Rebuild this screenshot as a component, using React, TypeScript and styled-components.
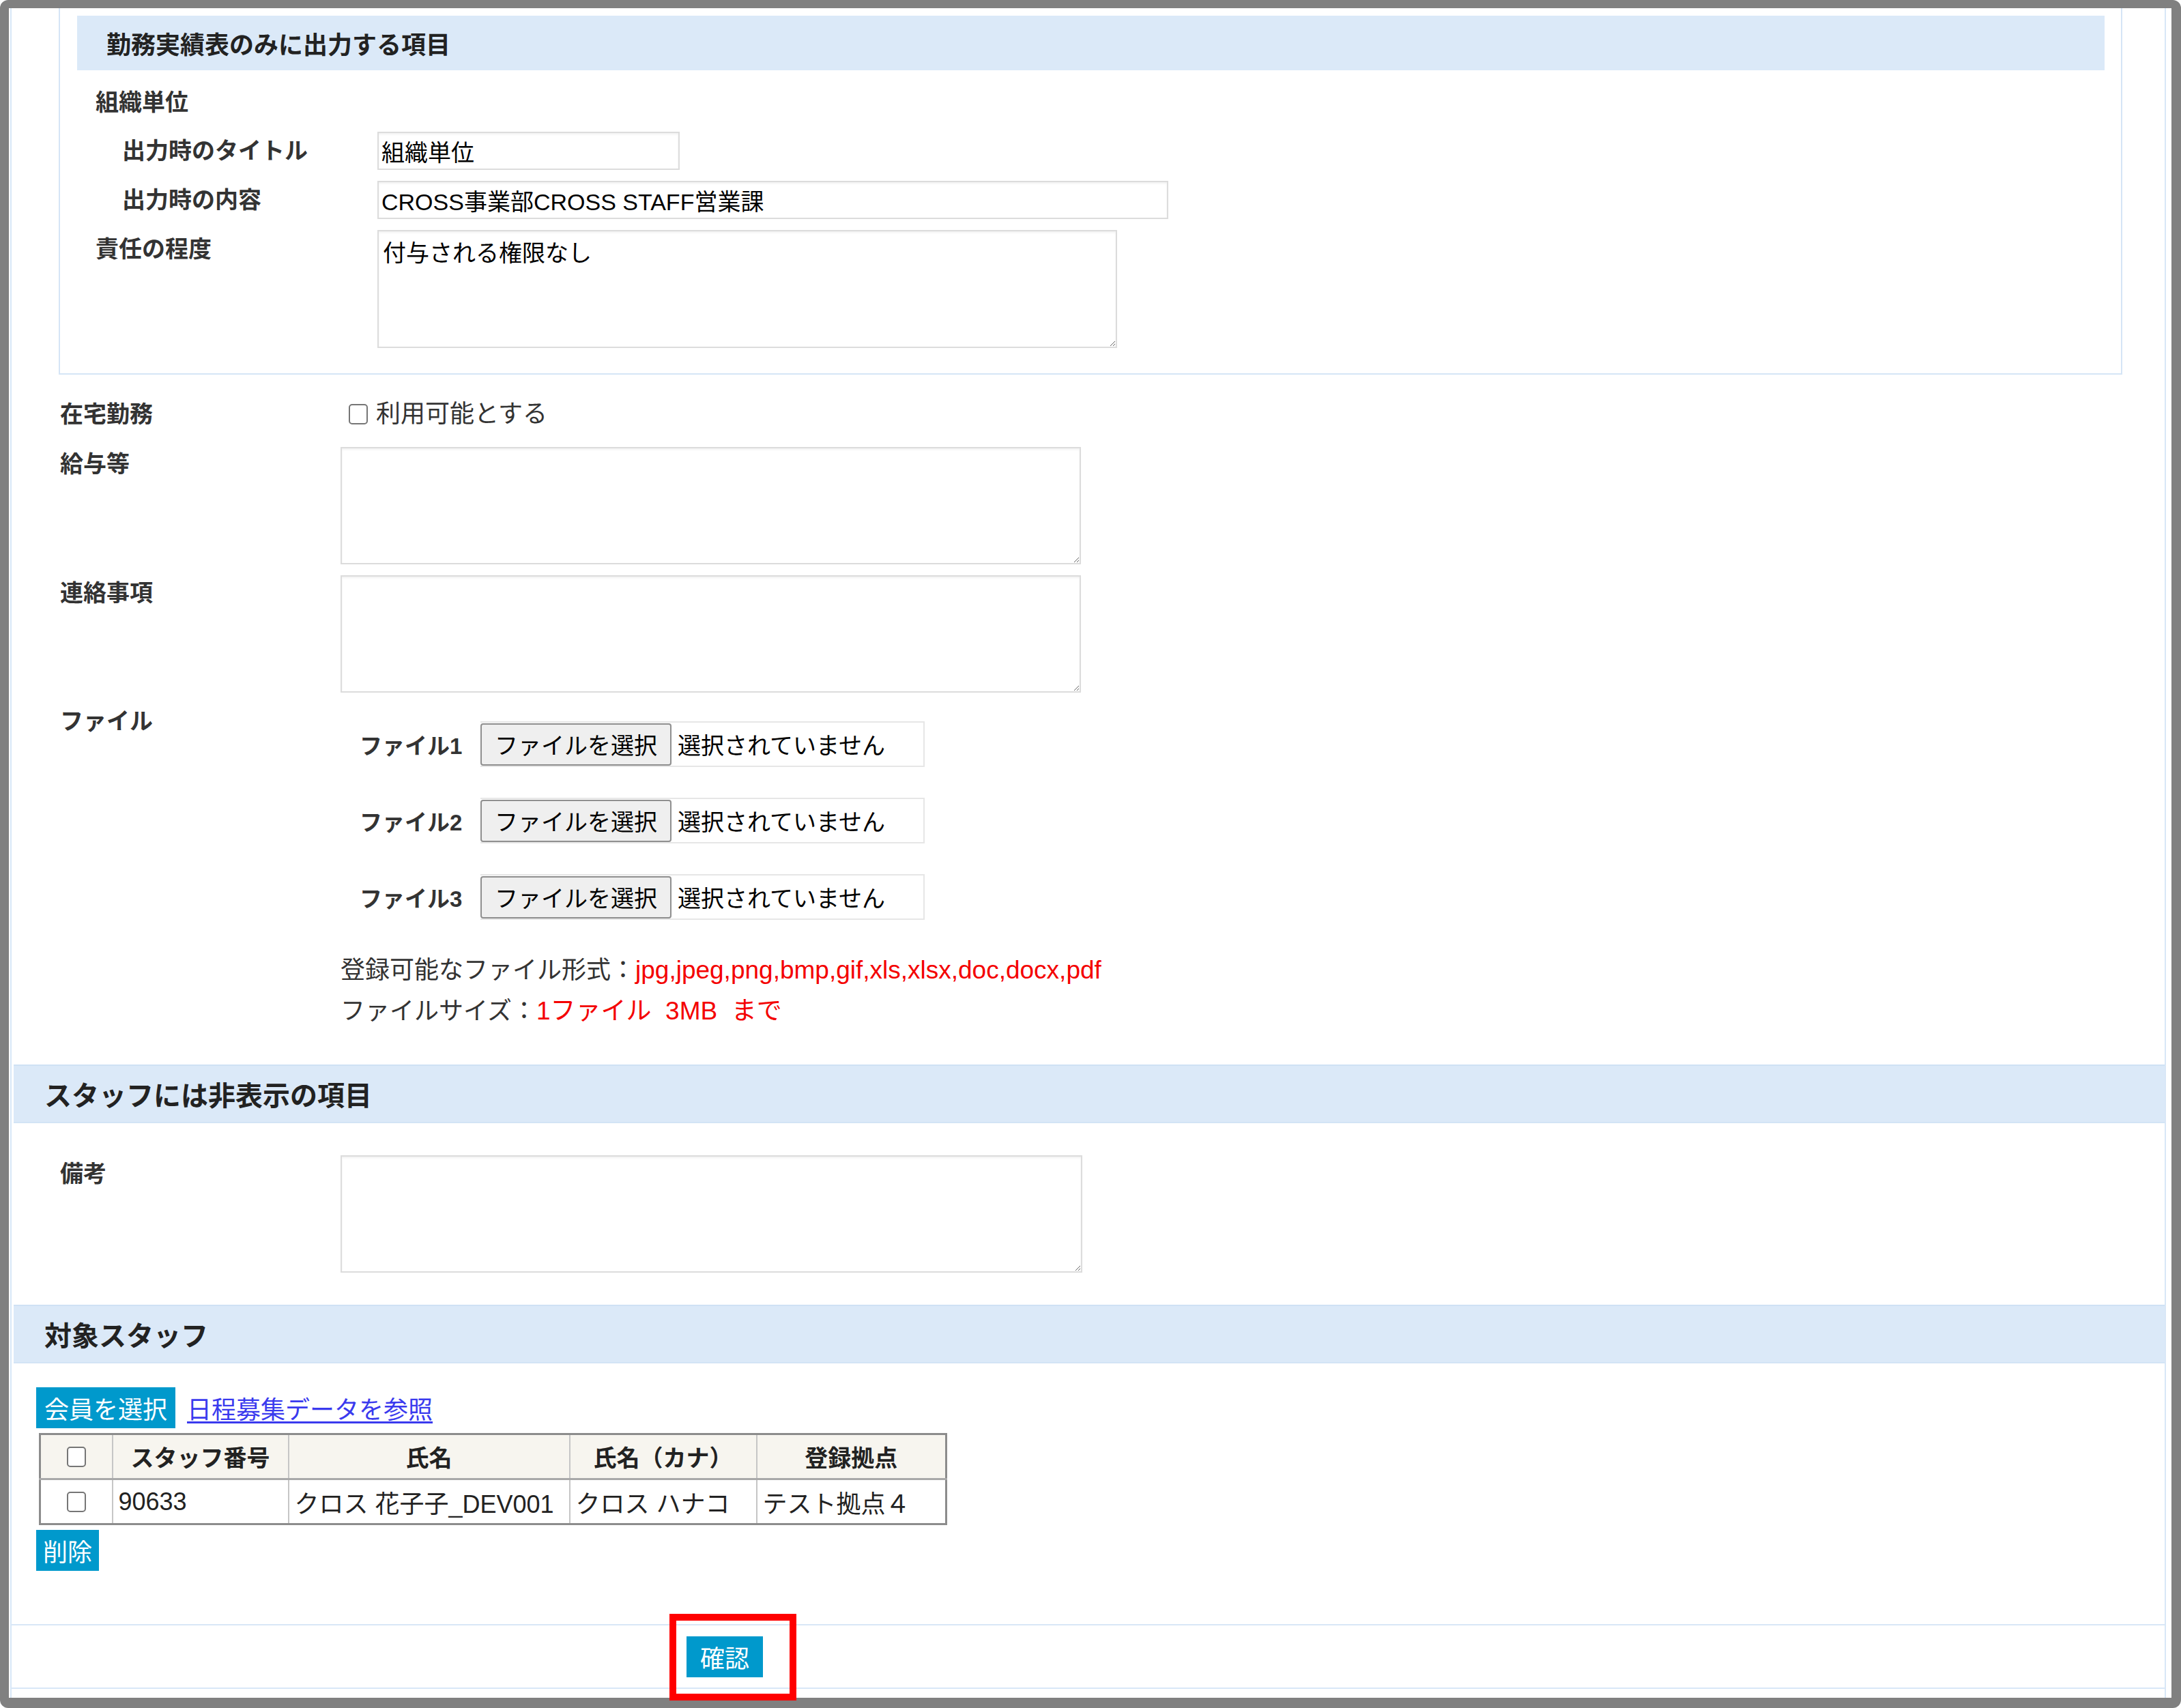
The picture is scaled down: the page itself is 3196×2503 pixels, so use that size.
import React from "react";
import styled, { createGlobalStyle } from "styled-components";

const GlobalStyle = createGlobalStyle`
  html, body {
    margin: 0;
    padding: 0;
    background: #ffffff;
  }
  body {
    font-family: "Liberation Sans", "Noto Sans CJK JP", sans-serif;
    color: #333;
  }
  * {
    box-sizing: border-box;
  }
`;

const Frame = styled.div`
  width: 3196px;
  height: 2503px;
  background: #808080;
  border-radius: 12px;
  padding: 12px 14px 15px 13px;
`;

const Sheet = styled.div`
  height: 100%;
  background: #ffffff;
  padding: 0 8px 0 2px;
`;

const Container = styled.div`
  height: 100%;
  border-left: 2px solid #d8e7f7;
  border-right: 2px solid #d8e7f7;
  display: flex;
  flex-direction: column;
`;

const SubBox = styled.div`
  margin: 0 62px 0 69px;
  padding: 11px 24px 37px 25px;
  border: 2px solid #d5e5f6;
  border-top: none;
`;

const SubTitle = styled.div`
  height: 80px;
  background: #dbe9f8;
  display: flex;
  align-items: center;
  padding-left: 43px;
  font-size: 36px;
  font-weight: 700;
  color: #222;
`;

const SectionBand = styled.div<{ $gap: number }>`
  margin: ${(p) => p.$gap}px 0 0 3px;
  height: 86px;
  background: #dbe9f8;
  border-top: 2px solid #cfe1f4;
  border-bottom: 2px solid #d3e4f5;
  display: flex;
  align-items: center;
  padding-left: 45px;
  font-size: 40px;
  font-weight: 700;
  color: #222;
`;

const Row = styled.div<{ $gap: number; $pad: number; $top?: boolean }>`
  display: flex;
  align-items: ${(p) => (p.$top ? "flex-start" : "center")};
  margin-top: ${(p) => p.$gap}px;
  padding-left: ${(p) => p.$pad}px;
`;

const Label = styled.div<{ $w: number; $indent?: number; $lh?: number }>`
  flex: none;
  width: ${(p) => p.$w - (p.$indent ?? 0)}px;
  margin-left: ${(p) => p.$indent ?? 0}px;
  line-height: ${(p) => p.$lh ?? 44}px;
  font-size: 34px;
  font-weight: 700;
  color: #333;
`;

const TextInput = styled.input<{ $w: number }>`
  width: ${(p) => p.$w}px;
  height: 56px;
  border: 2px solid #dcdcdc;
  box-shadow: inset 0 2px 3px rgba(0, 0, 0, 0.06);
  padding: 0 4px;
  font-family: inherit;
  font-size: 34px;
  color: #000;
  background: #fff;
  outline: none;
`;

const TextArea = styled.textarea<{ $w: number; $h: number }>`
  display: block;
  width: ${(p) => p.$w}px;
  height: ${(p) => p.$h}px;
  border: 2px solid #dcdcdc;
  box-shadow: inset 0 2px 3px rgba(0, 0, 0, 0.06);
  padding: 12px 6px;
  font-family: inherit;
  font-size: 34px;
  line-height: 1.2;
  color: #000;
  background: #fff;
  resize: both;
  outline: none;
`;

const Check = styled.input.attrs({ type: "checkbox" })`
  appearance: none;
  flex: none;
  width: 28px;
  height: 30px;
  margin: 0;
  border: 2px solid #767676;
  border-radius: 5px;
  background: #fff;
`;

const CheckLabel = styled.label`
  display: flex;
  align-items: center;
  gap: 12px;
  margin-left: 12px;
  height: 44px;
  line-height: 44px;
  font-size: 36px;
  color: #333;
`;

const FileList = styled.div`
  display: flex;
  flex-direction: column;
  padding-top: 26px;
`;

const FileRow = styled.div<{ $gap: number }>`
  display: flex;
  align-items: center;
  margin-top: ${(p) => p.$gap}px;
  padding-left: 28px;
`;

const FileName = styled.div`
  width: 177px;
  font-size: 33px;
  font-weight: 700;
  color: #333;
`;

const FileBox = styled.div`
  display: flex;
  align-items: center;
  width: 651px;
  height: 67px;
  border: 2px solid #e6e6e6;
  border-left: none;
`;

const FileButton = styled.button`
  height: 62px;
  padding: 0 19px;
  background: #efefef;
  border: 2px solid #8f8f8f;
  border-radius: 4px;
  font-family: inherit;
  font-size: 34px;
  color: #000;
`;

const FileStatus = styled.span`
  margin-left: 9px;
  font-size: 34px;
  color: #000;
`;

const Notes = styled.div`
  margin-top: 44px;
  font-size: 36px;
  line-height: 60px;
  color: #333;
  white-space: pre;
`;

const Red = styled.span`
  color: #f40000;
  font-size: 37px;
`;

const Actions = styled.div`
  display: flex;
  align-items: center;
  margin-top: 35px;
  padding-left: 36px;
`;

const BlueButton = styled.button<{ $px: number }>`
  height: 60px;
  padding: 0 ${(p) => p.$px}px;
  background: #0099cc;
  border: none;
  border-radius: 0;
  font-family: inherit;
  font-size: 36px;
  color: #fff;
`;

const RefLink = styled.a`
  margin-left: 17px;
  font-size: 36px;
  color: #3a3aee;
  text-decoration: underline;
  text-underline-offset: 4px;
`;

const StaffTable = styled.table`
  margin: 7px 0 0 40px;
  border-collapse: collapse;
  border: 3px solid #8c8c8c;
  font-size: 36px;
  color: #222;
`;

const Th = styled.th<{ $w: number }>`
  width: ${(p) => p.$w}px;
  height: 66px;
  background: #f7f5ef;
  border: 2px solid #c6c6c6;
  border-bottom: 3px solid #a9a9a9;
  font-size: 34px;
  font-weight: 700;
  text-align: center;
  padding: 0;
`;

const Td = styled.td<{ $center?: boolean }>`
  height: 66px;
  border: 2px solid #c6c6c6;
  padding: 0 8px;
  text-align: ${(p) => (p.$center ? "center" : "left")};
  white-space: nowrap;
`;

const CellCheck = styled(Check)`
  display: block;
  margin: 0 auto;
`;

const DeleteRow = styled.div`
  margin-top: 7px;
  padding-left: 36px;
`;

const Footer = styled.div`
  margin-top: 78px;
  height: 95px;
  border-top: 2px solid #d8e7f7;
  border-bottom: 2px solid #d8e7f7;
  padding: 16px 0 0 989px;
`;

const Marked = styled.span`
  position: relative;
  display: inline-block;
`;

const Highlight = styled.span`
  position: absolute;
  left: -25px;
  top: -33px;
  width: 186px;
  height: 127px;
  border: 10px solid #ff0000;
  pointer-events: none;
`;

const staff = [
  { no: "90633", name: "クロス 花子子_DEV001", kana: "クロス ハナコ", base: "テスト拠点４" },
];

export default function App() {
  return (
    <>
      <GlobalStyle />
      <Frame>
        <Sheet>
          <Container>
            <SubBox>
              <SubTitle>勤務実績表のみに出力する項目</SubTitle>
              <Row $gap={25} $pad={27}>
                <Label $w={413}>組織単位</Label>
              </Row>
              <Row $gap={21} $pad={27}>
                <Label $w={413} $indent={39}>出力時のタイトル</Label>
                <TextInput $w={443} defaultValue="組織単位" />
              </Row>
              <Row $gap={16} $pad={27}>
                <Label $w={413} $indent={39}>出力時の内容</Label>
                <TextInput $w={1159} defaultValue="CROSS事業部CROSS STAFF営業課" />
              </Row>
              <Row $gap={16} $pad={27} $top>
                <Label $w={413} $lh={56}>責任の程度</Label>
                <TextArea $w={1084} $h={173} defaultValue="付与される権限なし" />
              </Row>
            </SubBox>

            <Row $gap={36} $pad={71}>
              <Label $w={411}>在宅勤務</Label>
              <CheckLabel>
                <Check />
                利用可能とする
              </CheckLabel>
            </Row>
            <Row $gap={26} $pad={71} $top>
              <Label $w={411} $lh={50}>給与等</Label>
              <TextArea $w={1085} $h={172} />
            </Row>
            <Row $gap={16} $pad={71} $top>
              <Label $w={411} $lh={52}>連絡事項</Label>
              <TextArea $w={1085} $h={172} />
            </Row>
            <Row $gap={16} $pad={71} $top>
              <Label $w={411} $lh={52}>ファイル</Label>
              <FileList>
                {[1, 2, 3].map((n) => (
                  <FileRow key={n} $gap={n === 1 ? 0 : 45}>
                    <FileName>ファイル{n}</FileName>
                    <FileBox>
                      <FileButton>ファイルを選択</FileButton>
                      <FileStatus>選択されていません</FileStatus>
                    </FileBox>
                  </FileRow>
                ))}
                <Notes>
                  登録可能なファイル形式：<Red>jpg,jpeg,png,bmp,gif,xls,xlsx,doc,docx,pdf</Red>
                  {"\n"}ファイルサイズ：<Red>{"1ファイル  3MB  まで"}</Red>
                </Notes>
              </FileList>
            </Row>

            <SectionBand $gap={48}>スタッフには非表示の項目</SectionBand>
            <Row $gap={47} $pad={71} $top>
              <Label $w={411} $lh={54}>備考</Label>
              <TextArea $w={1087} $h={172} />
            </Row>

            <SectionBand $gap={47}>対象スタッフ</SectionBand>
            <Actions>
              <BlueButton $px={12}>会員を選択</BlueButton>
              <RefLink href="#">日程募集データを参照</RefLink>
            </Actions>
            <div>
              <StaffTable>
                <thead>
                  <tr>
                    <Th $w={106}>
                      <CellCheck />
                    </Th>
                    <Th $w={258}>スタッフ番号</Th>
                    <Th $w={412}>氏名</Th>
                    <Th $w={274}>氏名（カナ）</Th>
                    <Th $w={278}>登録拠点</Th>
                  </tr>
                </thead>
                <tbody>
                  {staff.map((s) => (
                    <tr key={s.no}>
                      <Td $center>
                        <CellCheck />
                      </Td>
                      <Td>{s.no}</Td>
                      <Td>{s.name}</Td>
                      <Td>{s.kana}</Td>
                      <Td>{s.base}</Td>
                    </tr>
                  ))}
                </tbody>
              </StaffTable>
            </div>
            <DeleteRow>
              <BlueButton $px={10}>削除</BlueButton>
            </DeleteRow>

            <Footer>
              <Marked>
                <BlueButton $px={20}>確認</BlueButton>
                <Highlight />
              </Marked>
            </Footer>
          </Container>
        </Sheet>
      </Frame>
    </>
  );
}
